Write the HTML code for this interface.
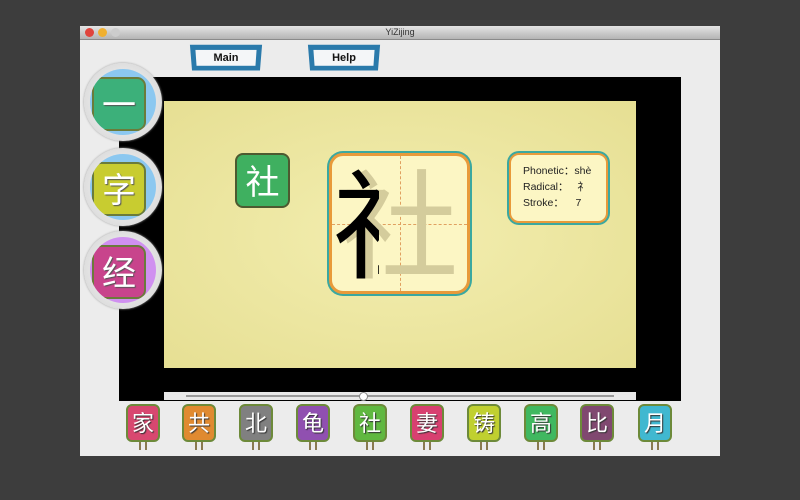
<!DOCTYPE html>
<html><head><meta charset="utf-8"><style>
body{margin:0;width:800px;height:500px;background:#3d3d3d;position:relative;overflow:hidden;font-family:"Liberation Sans","Noto Sans CJK SC",sans-serif}
.win{position:absolute;left:80px;top:26px;width:640px;height:430px;background:#ececec}
.tb{position:absolute;left:0;top:0;width:640px;height:13px;background:linear-gradient(#e4e4e4,#b4b4b4);border-bottom:1px solid #8a8a8a;font-size:9px;text-align:center;line-height:13px;color:#333}
.dot{position:absolute;top:2px;width:9px;height:9px;border-radius:50%}
.btn{position:absolute;top:19px;width:70px;height:26px;background:#f4f6f8;border:5px solid #2a7aab;box-sizing:border-box;font-weight:bold;font-size:11px;text-align:center;line-height:17px;color:#111;transform:perspective(60px) rotateX(-8deg)}
.black{position:absolute;left:39px;top:51px;width:562px;height:324px;background:#000}
.paper{position:absolute;left:84px;top:75px;width:472px;height:267px;background:radial-gradient(ellipse at 50% 50%,#f3eeb0,#e6df93)}
.circ{position:absolute;left:4px;width:78px;height:78px;border-radius:50%;background:radial-gradient(#fff,#d0d0d0);box-shadow:0 0 2px #999}
.circ .in{position:absolute;left:6px;top:6px;width:66px;height:66px;border-radius:50%;background:#8cc8f0;overflow:hidden}
.circ .sq{position:absolute;left:2px;top:8px;width:50px;height:50px;border-radius:9px;border:2px solid #6b7b3a;color:#fff;font-size:34px;text-align:center;line-height:48px;font-family:"Noto Sans CJK SC",sans-serif;text-shadow:1px 1px 1px #555}
.tile{position:absolute;top:404px;width:34px;height:38px;border-radius:6px;border:2px solid #6d8a3a;box-sizing:border-box;color:#fff;font-size:22px;text-align:center;line-height:33px;font-family:"Noto Sans CJK SC",sans-serif;text-shadow:1px 1px 1px #333}
.leg{position:absolute;top:442px;width:8px;height:8px;border-left:2px solid #8a7a50;border-right:2px solid #8a7a50;box-sizing:border-box}
</style></head><body>
<div class="win">
<div class="tb">YiZijing<div class="dot" style="left:5px;background:#e0443c"></div><div class="dot" style="left:18px;background:#f0b030"></div><div class="dot" style="left:31px;background:#ccc"></div></div>
<div class="btn" style="left:111px">Main</div>
<div class="btn" style="left:229px">Help</div>
<div class="black"></div>
<div class="paper"></div>
<div class="circ" style="top:37px"><div class="in"><div class="sq" style="background:#3cb07a">一</div></div></div>
<div class="circ" style="top:122px"><div class="in"><div class="sq" style="background:#c8cc30">字</div></div></div>
<div class="circ" style="top:205px"><div class="in" style="background:#d090f0"><div class="sq" style="background:#c8448c">经</div></div></div>
<div style="position:absolute;left:155px;top:127px;width:55px;height:55px;border-radius:8px;background:#3fb060;border:2px solid #4d5a30;box-sizing:border-box;color:#fff;font-size:34px;text-align:center;line-height:50px;font-family:'Noto Sans CJK SC',sans-serif">社</div>
<div style="position:absolute;left:249px;top:127px;width:141px;height:141px;border-radius:14px;background:#fcf6c4;border:3px solid #e89a3a;box-shadow:0 0 0 2px #3aa8a0;box-sizing:border-box;overflow:hidden">
<div style="position:absolute;left:68px;top:0;height:100%;border-left:1px dashed #e0a060"></div>
<div style="position:absolute;top:68px;left:0;width:100%;border-top:1px dashed #e0a060"></div>
<div style="position:absolute;left:0;top:-8px;width:135px;text-align:center;font-size:118px;line-height:140px;color:#d4cc9c;font-family:'Noto Sans CJK SC',sans-serif">社</div>
<div style="position:absolute;left:0;top:-8px;width:47px;overflow:hidden;font-size:118px;line-height:140px;color:#000;font-family:'Noto Sans CJK SC',sans-serif;white-space:nowrap"><span style="margin-left:1px">社</span></div>
</div>
<div style="position:absolute;left:429px;top:127px;width:99px;height:70px;border-radius:10px;background:#fcf6c4;border:2px solid #e89a3a;box-shadow:0 0 0 2px #3aa8a0;box-sizing:border-box;font-size:10.5px;line-height:16px;padding:8px 0 0 12px;color:#222">Phonetic：shè<br>Radical：&nbsp;&nbsp;&nbsp;礻<br>Stroke：&nbsp;&nbsp;&nbsp;&nbsp;7</div>
<div style="position:absolute;left:84px;top:366px;width:472px;height:8px;background:#e8e8e8"><div style="position:absolute;left:22px;right:22px;top:3px;height:2px;background:#999"></div><div style="position:absolute;left:195px;top:0;width:7px;height:7px;border-radius:50%;background:#fff;border:1px solid #888"></div></div>
</div>
<div class="tile" style="left:126px;background:#d84870">家</div>
<div class="tile" style="left:182px;background:#e08a30">共</div>
<div class="tile" style="left:239px;background:#808080">北</div>
<div class="tile" style="left:296px;background:#9050b0">龟</div>
<div class="tile" style="left:353px;background:#60b840">社</div>
<div class="tile" style="left:410px;background:#d84070">妻</div>
<div class="tile" style="left:467px;background:#c0d030">铸</div>
<div class="tile" style="left:524px;background:#40b860">高</div>
<div class="tile" style="left:580px;background:#804870">比</div>
<div class="tile" style="left:638px;background:#40b8d0">月</div>
<div class="leg" style="left:139px"></div><div class="leg" style="left:195px"></div><div class="leg" style="left:252px"></div><div class="leg" style="left:309px"></div><div class="leg" style="left:366px"></div><div class="leg" style="left:423px"></div><div class="leg" style="left:480px"></div><div class="leg" style="left:537px"></div><div class="leg" style="left:593px"></div><div class="leg" style="left:651px"></div>
</body></html>
